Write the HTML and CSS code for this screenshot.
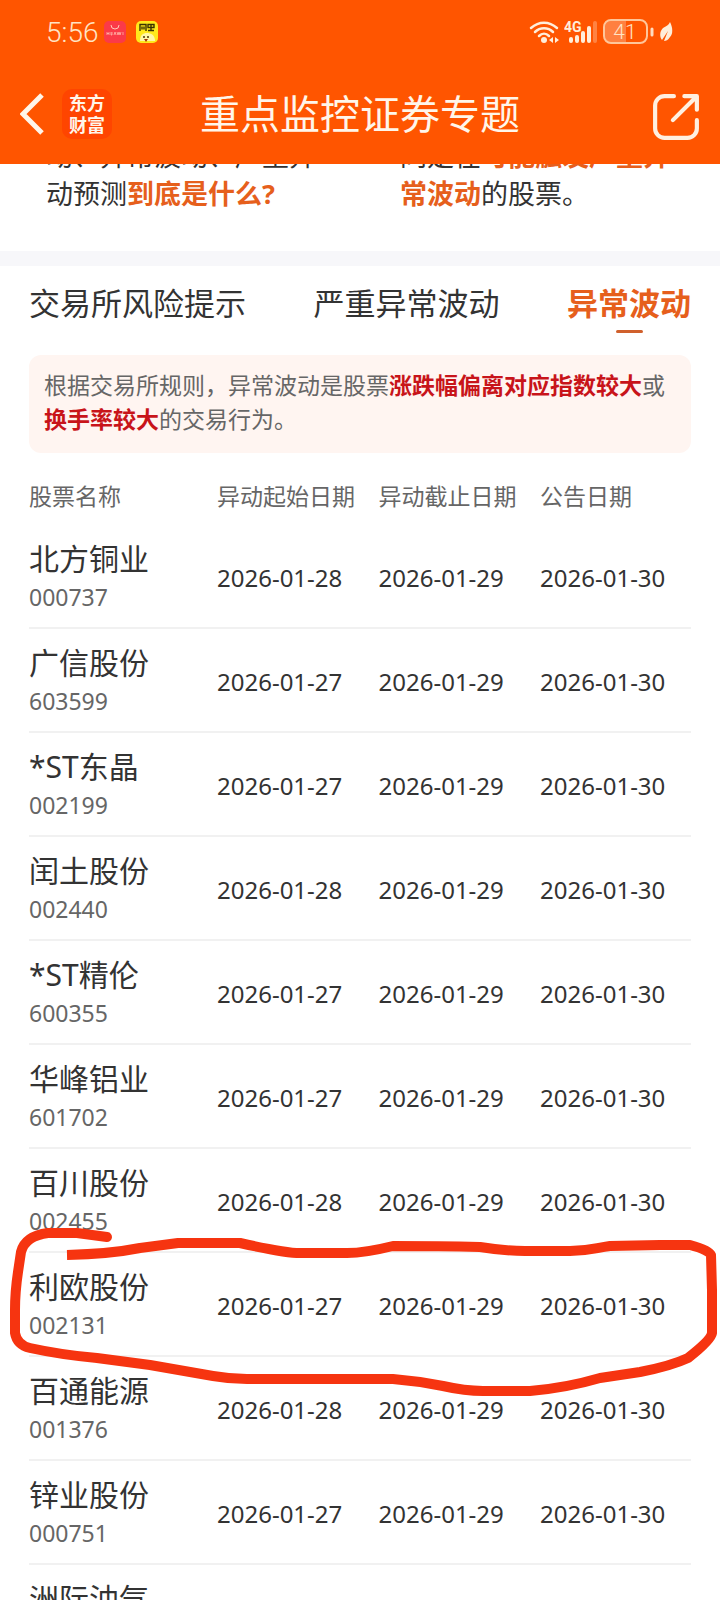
FILE: index.html
```html
<!DOCTYPE html>
<html lang="zh-CN">
<head>
    <meta charset="UTF-8">
    <meta name="viewport" content="width=device-width, initial-scale=1.0">
    <title>重点监控证券专题</title>
    <link rel="stylesheet" href="styles.css">
</head>
<body>
    <header>
        <div class="status-bar">
            <div class="status-left">
                <span class="clock">5:56</span>
                <svg class="app-badge" viewBox="0 0 22 22" aria-hidden="true">
                    <rect width="22" height="22" rx="5" fill="#fb3a48"/>
                    <path d="M7 4a4 4 0 0 0 8 0" fill="none" stroke="#ffc9b8" stroke-width="1"/>
                    <path d="M3 11v3M3 12.500h2M5 11v3M7 11v3h1v-3M10 14l1-3 1 3M13 11l1 3 1-3 1 3 1-3M19 11v3" fill="none" stroke="#ffc9b8" stroke-width="0.700"/>
                </svg>
                <svg class="app-badge yellow-badge" viewBox="0 0 22 22" aria-hidden="true">
                    <rect width="22" height="22" rx="5" fill="#ffe91c"/>
                    <path d="M4 10V3.500h6V10M6 5.500v3M8 5.500v3M12 3.500h6v3h-6zM12 9.500h6M15 4v5" fill="none" stroke="#3a3200" stroke-width="1.400"/>
                    <path d="M4 20c0-6 3-8 7-8s8 2 8 8z" fill="#fff7a8"/>
                    <circle cx="8" cy="16" r="1" fill="#4a3500"/>
                    <circle cx="12" cy="16" r="1" fill="#4a3500"/>
                    <path d="M8 18h4l-2 3z" fill="#a83200"/>
                </svg>
            </div>
            <div class="status-right">
                <svg class="wifi" viewBox="0 0 30 24" aria-hidden="true">
                    <g fill="none" stroke="#ffeeda" stroke-width="2.500" stroke-linecap="round">
                        <path d="M2 8c8-7 18-7 26 0"/>
                        <path d="M6 12c5-5 13-5 18 0"/>
                        <path d="M10 16c3-3 7-3 10 0"/>
                    </g>
                    <circle cx="15" cy="20" r="3" fill="#ffeeda"/>
                    <path d="M24 17v6l-4-3zM26 17v6l4-3z" fill="#ffeeda"/>
                </svg>
                <svg class="signal" viewBox="0 0 34 24" aria-hidden="true">
                    <text class="network" x="0" y="12">4G</text>
                    <g stroke="#ffeeda" stroke-width="4" stroke-linecap="round">
                        <path d="M7 19v2M13 17v4M19 13v8M25 8v13"/>
                        <path d="M31 3v18" opacity="0.300"/>
                    </g>
                </svg>
                <svg class="battery" viewBox="0 0 52 26" aria-hidden="true">
                    <path d="M8 2h15v22H8a6 6 0 0 1-6-6V8a6 6 0 0 1 6-6z" fill="#ff8040"/>
                    <rect x="1" y="1" width="43" height="23" rx="7" fill="none" stroke="#ffc69a" stroke-width="2"/>
                    <path d="M49 10v6" stroke="#ffdcc0" stroke-width="3" stroke-linecap="round"/>
                    <text class="charge" x="22" y="20" text-anchor="middle">41</text>
                </svg>
                <svg class="leaf" viewBox="0 0 14 20" aria-hidden="true">
                    <path d="M10 0c3 6 3 12 0 15-2 3-4 4-6 4l4-10-6 9c-3-4-2-9 1-12 3-2 6-3 7-6z" fill="#ffeeda"/>
                </svg>
            </div>
        </div>
        <nav class="nav-bar">
            <div class="nav-left">
                <button type="button" class="icon-btn" aria-label="返回">
                    <svg class="back-icon" viewBox="0 0 24 42" aria-hidden="true">
                        <path d="M22 2L3 21l19 19" fill="none" stroke="#fff6ea" stroke-width="5"/>
                    </svg>
                </button>
                <a href="#" class="logo">东方<br>财富</a>
            </div>
            <h1>重点监控证券专题</h1>
            <button type="button" class="icon-btn share-btn" aria-label="分享">
                <svg class="share-icon" viewBox="0 0 46 46" aria-hidden="true">
                    <path d="M21 3H12a9 9 0 0 0-9 9v22a9 9 0 0 0 9 9h22a9 9 0 0 0 9-9V26M31 3h12v13M42 4L20 26" fill="none" stroke="#fff0e0" stroke-width="4" stroke-linecap="round" stroke-linejoin="round"/>
                </svg>
            </button>
        </nav>
    </header>

    <section class="intro">
        <p class="intro-card">动、异常波动、严重异<br>动预测<strong>到底是什么?</strong></p>
        <p class="intro-card">同是在<strong>可能触发严重异<br>常波动</strong>的股票。</p>
    </section>

    <main>
        <div class="tabs">
            <a href="#" class="tab">交易所风险提示</a>
            <a href="#" class="tab">严重异常波动</a>
            <a href="#" class="tab active">异常波动</a>
        </div>

        <p class="notice">根据交易所规则，异常波动是股票<strong>涨跌幅偏离对应指数较大</strong>或<strong>换手率较大</strong>的交易行为。</p>

        <table class="stocks">
            <thead>
                <tr><th class="col-name">股票名称</th><th class="col-date">异动起始日期</th><th class="col-date">异动截止日期</th><th>公告日期</th></tr>
            </thead>
            <tbody>
                <tr><td><span class="name">北方铜业</span><span class="code">000737</span></td><td>2026-01-28</td><td>2026-01-29</td><td>2026-01-30</td></tr>
                <tr><td><span class="name">广信股份</span><span class="code">603599</span></td><td>2026-01-27</td><td>2026-01-29</td><td>2026-01-30</td></tr>
                <tr><td><span class="name">*ST东晶</span><span class="code">002199</span></td><td>2026-01-27</td><td>2026-01-29</td><td>2026-01-30</td></tr>
                <tr><td><span class="name">闰土股份</span><span class="code">002440</span></td><td>2026-01-28</td><td>2026-01-29</td><td>2026-01-30</td></tr>
                <tr><td><span class="name">*ST精伦</span><span class="code">600355</span></td><td>2026-01-27</td><td>2026-01-29</td><td>2026-01-30</td></tr>
                <tr><td><span class="name">华峰铝业</span><span class="code">601702</span></td><td>2026-01-27</td><td>2026-01-29</td><td>2026-01-30</td></tr>
                <tr><td><span class="name">百川股份</span><span class="code">002455</span></td><td>2026-01-28</td><td>2026-01-29</td><td>2026-01-30</td></tr>
                <tr><td><span class="name">利欧股份</span><span class="code">002131</span></td><td>2026-01-27</td><td>2026-01-29</td><td>2026-01-30</td></tr>
                <tr><td><span class="name">百通能源</span><span class="code">001376</span></td><td>2026-01-28</td><td>2026-01-29</td><td>2026-01-30</td></tr>
                <tr><td><span class="name">锌业股份</span><span class="code">000751</span></td><td>2026-01-27</td><td>2026-01-29</td><td>2026-01-30</td></tr>
                <tr><td><span class="name">洲际油气</span></td><td></td><td></td><td></td></tr>
            </tbody>
        </table>
    </main>

    <!-- hand-drawn ring around 利欧股份 -->
    <svg class="marker" viewBox="0 0 720 180" preserveAspectRatio="none" aria-hidden="true">
        <g fill="none" stroke="#f63410" stroke-width="10" stroke-linejoin="round">
            <path d="M77 13H48Q25 16 21 32L18 52Q15 72 15 90V113Q17 125 30 128Q62 135 97 138L150 145Q184 151 213 156Q230 159 247 159H393Q418 161 443 166Q465 171 483 171H530Q566 168 600 158L640 152Q671 146 688 138Q711 120 712 113V70L711 35Q709 30 690 25H660L610 26C595 28 590 31 570 31H525Q505 31 480 27Q440 26 393 26Q365 33 347 33H300Q285 33 240 23H178L140 28Q110 34 67 35"/>
            <path d="M77 13L107 17" stroke-linecap="round"/>
        </g>
    </svg>
</body>
</html>
```

FILE: styles.css
```css
* {
    box-sizing: border-box;
}

html {
    height: 100%;
    overflow: hidden;
}

body {
    position: relative;
    height: 100%;
    overflow: hidden;
    margin: 0;
    font-family: 'Noto Sans', 'Noto Sans CJK SC', sans-serif;
    background-color: #fff;
    color: #333;
}

a {
    color: inherit;
    text-decoration: none;
}

strong {
    color: #e65f1c;
    font-weight: bold;
}

header {
    background-color: #ff5500;
    color: #fff6ea;
}

.status-bar {
    display: flex;
    justify-content: space-between;
    align-items: center;
    height: 64px;
    padding: 0 46px;
}

.status-left,
.status-right {
    display: flex;
    align-items: center;
}

.status-right {
    gap: 5px;
}

.clock {
    margin-right: 6px;
    font-family: Roboto, sans-serif;
    font-size: 28px;
    font-weight: 300;
    color: #ffe4c4;
}

.app-badge {
    width: 22px;
    height: 22px;
}

.yellow-badge {
    margin-left: 10px;
}

.wifi {
    width: 30px;
    height: 24px;
}

.signal {
    width: 34px;
    height: 24px;
}

.network {
    font-family: Roboto, sans-serif;
    font-size: 14px;
    font-weight: bold;
    fill: #ffeeda;
}

.battery {
    width: 52px;
    height: 26px;
}

.charge {
    font-family: Roboto, sans-serif;
    font-size: 21px;
    font-weight: 300;
    fill: #ffe4c4;
}

.leaf {
    width: 14px;
    height: 20px;
}

.nav-bar {
    display: grid;
    grid-template-columns: 1fr auto 1fr;
    align-items: center;
    height: 100px;
    padding: 0 20px;
}

.nav-left {
    display: flex;
    align-items: center;
    gap: 18px;
}

.icon-btn {
    display: flex;
    padding: 0;
    border: none;
    background: none;
    cursor: pointer;
}

.back-icon {
    width: 24px;
    height: 42px;
}

.logo {
    width: 50px;
    padding: 3px 0;
    border-radius: 10px;
    background-color: #ff4500;
    font-size: 18px;
    font-weight: bold;
    line-height: 22px;
    text-align: center;
}

h1 {
    margin: 0;
    font-size: 40px;
    font-weight: normal;
    line-height: 48px;
}

.share-btn {
    justify-self: end;
    padding-top: 6px;
}

.share-icon {
    width: 48px;
    height: 48px;
}

/* scrolled halfway under the header */
.intro {
    display: flex;
    align-items: flex-end;
    gap: 34px;
    height: 102px;
    padding: 0 23px 38px;
    border-bottom: 15px solid #f7f7fa;
    overflow: hidden;
}

.intro-card {
    flex: 1;
    margin: 0;
    padding: 0 23px;
    font-size: 27px;
    line-height: 38px;
    white-space: nowrap;
}

main {
    padding: 0 29px;
}

.tabs {
    display: flex;
    justify-content: space-between;
    height: 89px;
    padding-top: 15px;
}

.tab {
    font-size: 31px;
    line-height: 44px;
}

.tab.active {
    color: #e65f1c;
    font-weight: bold;
}

.tab.active::after {
    content: '';
    display: block;
    width: 27px;
    height: 3px;
    margin: 5px auto 0;
    border-radius: 2px;
    background-color: #d0602c;
}

.notice {
    margin: 0;
    padding: 13px 15px 17px;
    border-radius: 12px;
    background-color: #fff5f1;
    color: #666;
    font-size: 23px;
    line-height: 34px;
}

.notice strong {
    color: #c8141a;
}

.stocks {
    width: 100%;
    table-layout: fixed;
    border-collapse: separate;
    border-spacing: 0;
    text-align: left;
}

.stocks th {
    padding: 26px 0 12px;
    color: #666;
    font-size: 23px;
    font-weight: normal;
    line-height: 34px;
    white-space: nowrap;
}

.stocks .col-name {
    width: 28.4%;
}

.stocks .col-date {
    width: 24.4%;
}

.stocks td {
    padding: 14px 0 12px;
    border-bottom: 2px solid #f1f1f1;
    font-size: 24px;
    white-space: nowrap;
}

.name,
.code {
    display: block;
}

.name {
    font-size: 30px;
    line-height: 40px;
}

.code {
    color: #666;
    font-size: 23px;
    line-height: 36px;
}

.marker {
    position: absolute;
    top: 1220px;
    left: 0;
    width: 100%;
    height: 180px;
}
```
